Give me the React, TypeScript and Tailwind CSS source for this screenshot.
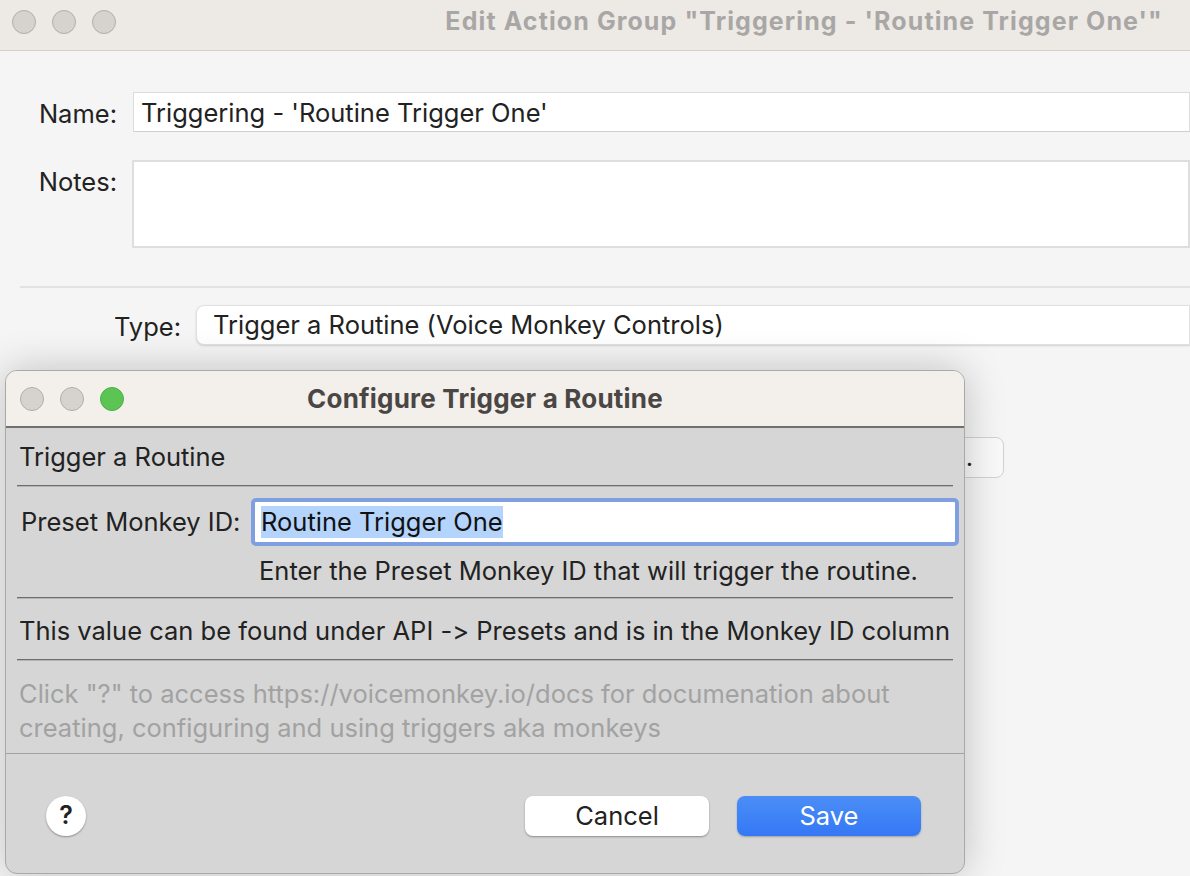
import React from 'react'

const font = { fontFamily: 'Inter, "Liberation Sans", sans-serif' }

function Light({ color = 'bg-[#d6d2ce]', border = 'border-[#b2aeaa]' }: { color?: string; border?: string }) {
  return <span className={`block h-[24px] w-[24px] rounded-full border ${color} ${border}`} />
}

function Separator() {
  return (
    <div className="mx-[11px]">
      <div className="h-px bg-[#6e6e6e]" />
      <div className="h-px bg-[#b4b4b4]" />
    </div>
  )
}

/** 設定ダイアログ（前面のシート） */
function ConfigureDialog() {
  return (
    <div className="absolute left-[5px] top-[370px] flex h-[504px] w-[960px] flex-col overflow-hidden rounded-[12px] border border-[#a9a9a9] bg-[#d6d6d6] shadow-[0_0_40px_rgba(0,0,0,0.22)]">
      <div className="relative flex h-[57px] shrink-0 items-center gap-[16px] border-b-2 border-[#707070] bg-[#f3efeb] pl-[14px]">
        <Light />
        <Light />
        <Light color="bg-[#5bc452]" border="border-[#4fae47]" />
        <span className="absolute inset-0 flex items-center justify-center text-[26px] font-bold tracking-[0.2px] text-[#4a4644]">
          Configure Trigger a Routine
        </span>
      </div>

      <div className="flex h-[57px] items-center px-[13px] pt-[1px] text-[#222]">Trigger a Routine</div>
      <Separator />

      <div className="flex items-center pt-[11px]">
        <span className="w-[245px] pl-[15px] text-[#222]">Preset Monkey ID:</span>
        <div className="flex h-[48px] w-[708px] items-center rounded-[5px] border-[4px] border-[#7f9fe0] bg-white px-[6px]">
          <span className="bg-[#b5d4fc] leading-[32px] text-[#111]">Routine Trigger One</span>
        </div>
      </div>
      <div className="flex h-[51px] items-center pl-[253px] text-[#222]">
        Enter the Preset Monkey ID that will trigger the routine.
      </div>
      <Separator />
      <div className="flex h-[60px] items-center px-[13px] pt-[4px] text-[#222]">
        This value can be found under API -&gt; Presets and is in the Monkey ID column
      </div>
      <Separator />
      <div className="px-[13px] pt-[16px] leading-[34px] text-[#a2a2a2]">
        Click "?" to access https://voicemonkey.io/docs for documenation about
        <br />
        creating, configuring and using triggers aka monkeys
      </div>

      <div className="mt-[8px] h-px bg-[#a3a3a3]" />
      <div className="flex flex-1 items-start pt-[42px]">
        <div className="ml-[40px] flex h-[40px] w-[40px] items-center justify-center rounded-full bg-white text-[25px] font-semibold text-[#222] shadow-[0_1px_2px_rgba(0,0,0,0.35)]">
          ?
        </div>
        <div className="ml-auto mr-[43px] flex gap-[28px]">
          <button className="h-[40px] w-[184px] rounded-[8px] bg-white text-[#222] shadow-[0_1px_2px_rgba(0,0,0,0.35)]">
            Cancel
          </button>
          <button className="h-[40px] w-[184px] rounded-[8px] bg-gradient-to-b from-[#4b8ef6] to-[#3577f5] text-white shadow-[0_1px_2px_rgba(0,0,0,0.25)]">
            Save
          </button>
        </div>
      </div>
    </div>
  )
}

export default function App() {
  return (
    <div
      className="relative h-[876px] w-[1190px] overflow-hidden bg-[#f5f5f5] text-[25.5px] [font-feature-settings:'calt'_0]"
      style={font}
    >
      <div className="flex h-[51px] items-start gap-[16px] border-b border-[#d3d0cd] bg-[#ede9e5] pl-[12px] pt-[10px]">
        <Light />
        <Light />
        <Light />
        <span className="ml-auto mr-[27px] -mt-[7px] text-[25px] font-bold tracking-[1.1px] text-[#a9a7a5]">
          Edit Action Group "Triggering - 'Routine Trigger One'"
        </span>
      </div>

      <div className="flex flex-col pt-[40px]">
        <div className="flex items-center">
          <span className="w-[117px] pt-[4px] text-right text-[#222]">Name:</span>
          <div className="ml-[16px] flex h-[40px] flex-1 items-center border border-[#dcdcdc] border-b-[#cfcfcf] bg-white pl-[7px] pt-[2px] text-[#222]">
            Triggering - 'Routine Trigger One'
          </div>
        </div>
        <div className="mt-[27px] flex items-start">
          <span className="w-[117px] pt-[3px] text-right text-[#222]">Notes:</span>
          <div className="ml-[15px] h-[88px] flex-1 border-2 border-[#dedede] bg-white" />
        </div>
        <div className="ml-[20px] mt-[38px] h-[2px] bg-[#e2e2e2]" />
        <div className="mt-[16px] flex items-center">
          <span className="w-[181px] pt-[4px] text-right text-[#222]">Type:</span>
          <div className="ml-[15px] flex h-[40px] flex-1 items-center rounded-l-[8px] border border-[#e0e0e0] bg-white pl-[16px] text-[#222] shadow-[0_1px_2px_rgba(0,0,0,0.15)]">
            Trigger a Routine (Voice Monkey Controls)
          </div>
        </div>
        <div className="mt-[90px] flex">
          <div className="ml-[780px] flex h-[41px] w-[224px] items-center justify-end rounded-[8px] border border-[#d2d2d2] bg-[#f9f9f9] pr-[30px] text-[#222]">
            ...
          </div>
        </div>
      </div>

      <ConfigureDialog />
    </div>
  )
}
